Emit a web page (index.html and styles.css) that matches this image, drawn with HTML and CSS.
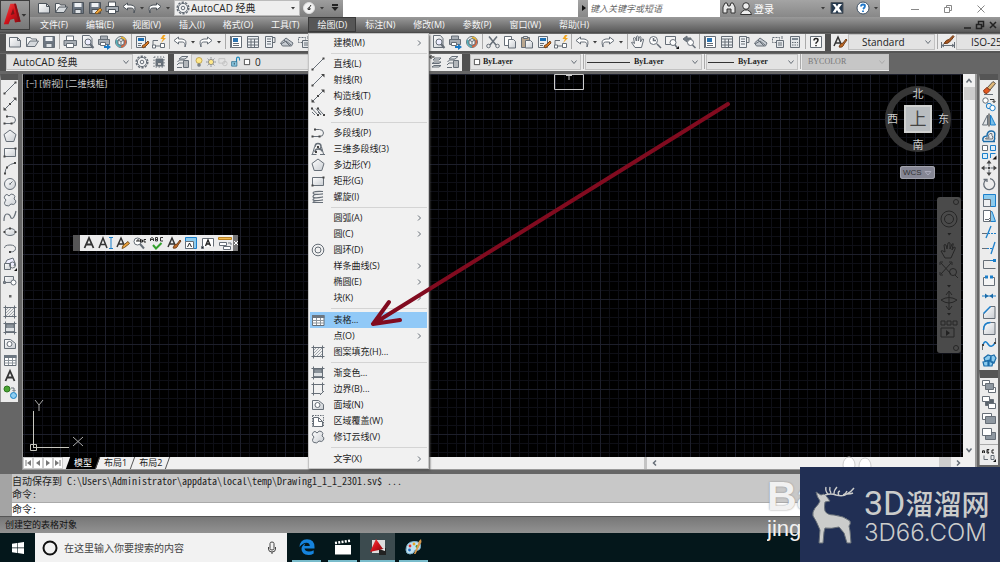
FILE: index.html
```html
<!DOCTYPE html>
<html lang="zh-CN">
<head>
<meta charset="utf-8">
<title>AutoCAD 经典</title>
<link rel="stylesheet" href="styles.css">
</head>
<body>
<svg class="defs" aria-hidden="true">
<defs>
<linearGradient id="red" x1="0" y1="0" x2="1" y2="1"><stop offset="0" stop-color="#f4504a"/><stop offset=".5" stop-color="#d3121b"/><stop offset="1" stop-color="#7e0a10"/></linearGradient>
<linearGradient id="pane" x1="0" y1="0" x2="1" y2="1"><stop offset="0" stop-color="#fff"/><stop offset="1" stop-color="#c9cdd2"/></linearGradient>
</defs>
<symbol id="new" viewBox="0 0 16 16"><path d="M2.500 3.500h8l3 3v6.500h-11z" fill="url(#pane)"/><path d="M10.500 3.500v3h3" /></symbol>
<symbol id="open" viewBox="0 0 16 16"><path d="M2.500 12.500v-9h4l1 1.500h5v2" fill="#f4f5f6"/><path d="M2.500 12.500l3.500-5.500h8.500l-3.500 5.500z" fill="#d5d9dd"/></symbol>
<symbol id="save" viewBox="0 0 16 16"><path d="M2.500 2.500h11v11h-11z" fill="#6c7682"/><path d="M4.500 3h7v4h-7z" fill="#eef1f4" stroke="none"/><path d="M5 9.500h6v4h-6z" fill="#dfe3e7"/></symbol>
<symbol id="saveas" viewBox="0 0 16 16"><use href="#save"/><path d="M8 13l5-5 2 2-5 4z" fill="#eda33b" stroke="#8a5a1c"/></symbol>
<symbol id="print" viewBox="0 0 16 16"><path d="M4.500 6v-4h7v4" fill="#fff"/><path d="M2 6.500h12.500v5H2z" fill="#a8aeb5"/><path d="M4.500 9.500h7v4h-7z" fill="#fff"/></symbol>
<symbol id="preview" viewBox="0 0 16 16"><path d="M3.500 1.500h7l2.500 3v9h-9.500z" fill="url(#pane)"/><circle cx="9" cy="8" r="3" fill="#eef"/><path d="M11 10l3.500 4" stroke-width="2"/></symbol>
<symbol id="publish" viewBox="0 0 16 16"><path d="M4.500 5V2h7v3M2.500 5.500h11v5h-11z" fill="#a8aeb5"/><path d="M4.500 8.500h5v3h-5z" fill="#fff"/><path d="M8 12h3v-2l4 3-4 3v-2H8z" fill="#1778c5" stroke="none"/></symbol>
<symbol id="cube" viewBox="0 0 16 16"><circle cx="8" cy="8" r="5.500" fill="#e6f0f2"/><path d="M8 2.500a6 6 0 0 1 5 3L8 8z" fill="#e4b53a" stroke="none"/><path d="M13 5.500a6 6 0 0 1-5 8V8z" fill="#d8653d" stroke="none"/><path d="M3 5.500L8 8v5.500a6 6 0 0 1-5-8z" fill="#52b0ba" stroke="none"/><path d="M8 4.500l3 1.500v4L8 11.500 5 10V6z" fill="#f5f7f8"/><path d="M5 6l3 1.500L11 6M8 7.500v4"/></symbol>
<symbol id="match" viewBox="0 0 16 16"><path d="M2.500 2.500h9v11h-9z" fill="#eef1f4"/><path d="M4 4h6v3H4z" fill="#1b6fb4" stroke="none"/><path d="M4 9.500h4M4 11.500h3"/><path d="M8 12l3-2 3-3 1 2-3 3-3 2z" fill="#d77a26" stroke="#7c4418"/></symbol>
<symbol id="block" viewBox="0 0 16 16"><path d="M2 12V6.500h5M4 12h7" /><path d="M1.500 11h3v3h-3zM9.500 9.500h4v4h-4z" fill="#fff"/><path d="M12 1L9.500 5H12l-2 4 5-5h-2.500l2-3z" fill="#f2a622" stroke="none"/></symbol>
<symbol id="undo" viewBox="0 0 16 16"><path d="M6.500 3L2 6.500 6.500 10V8h4q3 0 2.500 5 3-7.500-3-8H6.500z" fill="#fff"/></symbol>
<symbol id="redo" viewBox="0 0 16 16"><path d="M9.500 3L14 6.500 9.500 10V8h-4Q2.500 8 3 13 0 5.500 6 5h3.500z" fill="#fff"/></symbol>
<symbol id="arr" viewBox="0 0 8 8"><path d="M2 3h4L4 5.500z" fill="#3c3c3c" stroke="none"/></symbol>
<symbol id="chev" viewBox="0 0 8 8"><path d="M1.500 2.500L4 5.500l2.500-3" stroke-width="1"/></symbol>
<symbol id="sub" viewBox="0 0 8 8"><path d="M3 1.500L5.500 4 3 6.500" /></symbol>
<symbol id="props" viewBox="0 0 16 16"><path d="M3.500 2.500h10v11h-10z" fill="#fff"/><path d="M5 4h5v4H5z" fill="#2b73b0" stroke="none"/><path d="M5 9.500h6M5 11.500h6M2.500 2v12"/></symbol>
<symbol id="center" viewBox="0 0 16 16"><path d="M2.500 2.500h11v11h-11z" fill="#eef1f4"/><path d="M2.500 5h11M6 5v9M9.500 5v8M2.500 8h11M2.500 11h11"/></symbol>
<symbol id="palette" viewBox="0 0 16 16"><path d="M3.500 2.500h7v11h-7z" fill="#eef1f4"/><path d="M5 5h4M5 7.500h4M5 10h4M10.500 3.500h2.500v5h-2.500"/></symbol>
<symbol id="sheet" viewBox="0 0 16 16"><path d="M1.500 9L7 4l7 5-1.500 3h-9z" fill="#c5cad0"/><path d="M2 10l5-3 5 4M5 6l6 6"/></symbol>
<symbol id="markup" viewBox="0 0 16 16"><path d="M2.500 3.500h7v5h-7z" stroke-dasharray="2 1"/><path d="M6.500 6.500h7v7h-7z" fill="#e4e7ea"/><path d="M8 9h4M8 11h4M12 2v3"/></symbol>
<symbol id="calc" viewBox="0 0 16 16"><path d="M3.500 2.500h9v11h-9z" fill="#e4e7ea"/><path d="M5 4h6v2H5z" fill="#7c8791" stroke="none"/><path d="M5 8.500h6M5 11h6" stroke-dasharray="1.500 1"/></symbol>
<symbol id="help" viewBox="0 0 16 16"><path d="M2.500 2.500h11v11h-11z" fill="#f8f8f8"/><path d="M6 6.500q0-2 2-2t2 1.500-2 3v.8M8 11v1.200" stroke="#222" stroke-width="1.500"/></symbol>
<symbol id="cut" viewBox="0 0 16 16"><path d="M4 2.500L11 11M12 2.500L5 11" stroke-width="1.500"/><circle cx="3.500" cy="12" r="1.800"/><circle cx="12.500" cy="12" r="1.800"/></symbol>
<symbol id="copyc" viewBox="0 0 16 16"><path d="M2.500 2.500h7v9h-7z" fill="#fff"/><path d="M6.500 5.500h5l2 2v6.500h-7z" fill="url(#pane)"/></symbol>
<symbol id="paste" viewBox="0 0 16 16"><path d="M2.500 3.500h8v10h-8z" fill="#b9a68e"/><path d="M4.500 2.500h4v2h-4z" fill="#ddd"/><path d="M6.500 6.500h5l2 2v5.500h-7z" fill="url(#pane)"/></symbol>
<symbol id="hand" viewBox="0 0 16 16"><path d="M5 13.500L1.500 8.500q1-1 3 1L3.500 4q1-1 2 0l.8 3L6.500 2.500q1-1 1.800 0V7l1-4q1-.8 1.700.2L10.500 8l1.800-3q1.300-.5 1.200 1l-2 7.500z" fill="#f5f5f5"/></symbol>
<symbol id="zoomr" viewBox="0 0 16 16"><circle cx="6.500" cy="6.500" r="4" fill="#fff"/><path d="M6.500 4v2.500H9M10 10l4 4" stroke-width="1.500"/></symbol>
<symbol id="zoomw" viewBox="0 0 16 16"><path d="M1.500 2.500h10v8h-10z" fill="#f4f4f4"/><circle cx="9" cy="8.500" r="3" fill="#fff"/><path d="M11 11l2.500 3" stroke-width="1.500"/><path d="M15 12v3h-3z" fill="#111" stroke="none"/></symbol>
<symbol id="zoomp" viewBox="0 0 16 16"><path d="M6 2L2 5l4 3V6h4V4H6z" fill="#707a84"/><circle cx="9.500" cy="8.500" r="3" fill="#fff"/><path d="M11.500 11l3 3" stroke-width="1.500"/></symbol>
<symbol id="gear" viewBox="0 0 16 16"><circle cx="8" cy="8" r="5.800" stroke-width="1.500" stroke-dasharray="2.300 1.300"/><circle cx="8" cy="8" r="4.600" fill="#f2f3f4"/><circle cx="8" cy="8" r="1.800"/></symbol>
<symbol id="wsave" viewBox="0 0 16 16"><path d="M3 3h10v10H3z" stroke-dasharray="1.500 1.500"/><path d="M5 5h7v7H5z" fill="#68737e"/><path d="M6.500 8.500h4v3h-4z" fill="#ccc"/></symbol>
<symbol id="layers" viewBox="0 0 16 16"><path d="M4 5l3-2.500h6L10 5zM2.500 8l2-2h5M2 11l2-2h4M2 13.500h5" fill="#e4e7ea"/><path d="M8.500 6.500h5v7h-5z" fill="#fff"/><path d="M9 8h4M9 10h4M9 12h4"/></symbol>
<symbol id="layback" viewBox="0 0 16 16"><path d="M5 6l2-2h6l-2 2zM4 9.500l2-1.500h7l-2 1.500zM4 13l2-1.500h7L11 13z" fill="#e4e7ea"/><path d="M1.500 3h5M3.500 1L1.500 3l2 2" stroke="#111"/></symbol>
<symbol id="bulb" viewBox="0 0 16 16"><circle cx="8" cy="6" r="4" fill="#ffe88a" stroke="#b6963a"/><path d="M6.500 10.500h3v3h-3z" fill="#999"/></symbol>
<symbol id="sun" viewBox="0 0 16 16"><circle cx="8" cy="8" r="3.500" fill="#ffe88a" stroke="#777"/><path d="M8 1.500v2M8 12.500v2M1.500 8h2M12.500 8h2M3.500 3.500L5 5M11 11l1.500 1.500M12.500 3.500L11 5M5 11l-1.500 1.500"/></symbol>
<symbol id="vpf" viewBox="0 0 16 16"><g stroke="#bbb"><path d="M2.500 3.500h8v6h-8z"/><circle cx="10.500" cy="10" r="3"/></g></symbol>
<symbol id="lock" viewBox="0 0 16 16"><path d="M10 8V4q0-2.500 2-2.500T14 4v2" stroke="#1d86b8" stroke-width="1.500"/><path d="M3.500 7.500h7v6h-7z" fill="#8ec9e2" stroke="#286c8c"/><path d="M7 9v2.500" stroke="#123"/></symbol>
<symbol id="swatch" viewBox="0 0 16 16"><path d="M4.500 4.500h7v7h-7z" fill="#fff" stroke="#222"/></symbol>
<symbol id="astyle" viewBox="0 0 16 16"><path d="M2 12L6 3l4 9M3.500 9h5" stroke="#333" stroke-width="1.500"/><path d="M7 13q1-4 4-4l3-4 1 1-3 4q-1 4-5 3z" fill="#c06a24" stroke="#73401b"/></symbol>
<symbol id="dstyle" viewBox="0 0 16 16"><path d="M1.500 8v6M14.500 8v6M2 11.500h12M4 10l-2 1.500L4 13M12 10l2 1.500-2 1.500"/><path d="M4 9.500q2-4 5-4l4-4 1 1-3 4q-3 4-7 3z" fill="#a9581f" stroke="#6d3b1a"/></symbol>
<symbol id="line" viewBox="0 0 16 16"><path d="M2.500 13.500L13.500 2.500"/><path d="M1.500 12.500h2v2h-2zM12.500 1.500h2v2h-2z" fill="#444" stroke="none"/></symbol>
<symbol id="ray" viewBox="0 0 16 16"><path d="M2.500 13.500L13 3"/><path d="M1.500 12.500h2v2h-2zM11 2h3.500v3.500z" fill="#444" stroke="none"/></symbol>
<symbol id="xline" viewBox="0 0 16 16"><path d="M3 13L13 3"/><path d="M1.500 14.500V11L5 14.500zM14.500 1.500V5L11 1.500zM7 7h2v2H7z" fill="#444" stroke="none"/></symbol>
<symbol id="mline" viewBox="0 0 16 16"><path d="M2 4.500l6 6.500M8 4.500l6 6.500M2 8l3 3M6 4.500l5 6M8 8l3 3"/><path d="M1 3.500h2v2H1zM7 10h2v2H7zM7 3.500h2v2H7zM13 10h2v2h-2z" fill="#444" stroke="none"/></symbol>
<symbol id="pline" viewBox="0 0 16 16"><path d="M5.500 4.500h4q4 0 4 3.500t-4 3.500H2.500"/><path d="M4 3.500h2v2H4zM1.500 10.500h2v2h-2zM8.500 10.500h2v2h-2z" fill="#444" stroke="none"/></symbol>
<symbol id="p3d" viewBox="0 0 16 16"><path d="M4.500 6L2.500 13M11.500 6l2 7M1.500 13.500h5M10 13.500h5"/><path d="M5 6q0-3.500 3-3.500T11 5.500 8 8q4 0 4 2.500M5 11q0-3 3-3" stroke-width="1.500"/><path d="M7 5h2v2H7zM5 10h2v2H5z" fill="#444" stroke="none"/></symbol>
<symbol id="poly" viewBox="0 0 16 16"><path d="M8 2l6 4.500L11.800 13.500H4.200L2 6.500z" fill="url(#pane)"/></symbol>
<symbol id="rect" viewBox="0 0 16 16"><path d="M2.500 4.500h11v8h-11z" fill="url(#pane)"/><path d="M12.500 3.500h2v2h-2zM1.500 11.500h2v2h-2z" fill="#444" stroke="none"/></symbol>
<symbol id="helix" viewBox="0 0 16 16"><path d="M13 2.500Q3 2 3 4t10 1Q3 5 3 7.500t10 .500Q3 8.500 3 10.500t10 .500Q3 11.500 3 13.500h10" stroke-width="1.200"/></symbol>
<symbol id="donut" viewBox="0 0 16 16"><circle cx="8" cy="8" r="5.800"/><circle cx="8" cy="8" r="3"/></symbol>
<symbol id="arc" viewBox="0 0 16 16"><path d="M3 13.500Q3 5 13 3"/><path d="M2 12.500h2v2H2zM4 6.500h2v2H4zM12 2h2v2h-2z" fill="#444" stroke="none"/></symbol>
<symbol id="circle" viewBox="0 0 16 16"><circle cx="8" cy="8" r="5.500" fill="url(#pane)"/><path d="M8 8l2.500-2.500M7 8h2"/></symbol>
<symbol id="cloud" viewBox="0 0 16 16"><path d="M4 8q-3-2-1-4.500T7 4q2-3 4.500-1.500T12 7q3 1.500 1.500 4T9 12q-2 3-5 1.500T4 8z" fill="url(#pane)"/></symbol>
<symbol id="spline" viewBox="0 0 16 16"><path d="M2 13q0-7 3-7t4 4q3 2 5-7" stroke-width="1.200"/></symbol>
<symbol id="ellipse" viewBox="0 0 16 16"><ellipse cx="8" cy="8" rx="5.500" ry="3.500" fill="url(#pane)"/><path d="M1.500 7h2v2h-2zM12.500 7h2v2h-2zM7 3.500h2v2H7z" fill="#444" stroke="none"/></symbol>
<symbol id="earc" viewBox="0 0 16 16"><path d="M2.500 8q0-3 5.500-3t5.500 3.500T8 12"/><path d="M7 11h2v2H7z" fill="#444" stroke="none"/></symbol>
<symbol id="insert" viewBox="0 0 16 16"><path d="M3 8l2-4 6-2 2 5-1 3" fill="#eef"/><path d="M2.500 7.500h6v6h-6z" fill="url(#pane)"/><circle cx="10.500" cy="9" r="3"/><path d="M15 12v3h-3z" fill="#111" stroke="none"/></symbol>
<symbol id="mkblock" viewBox="0 0 16 16"><path d="M2.500 4.500h9v6h-9z" fill="url(#pane)"/><path d="M1.500 9.500h2v2h-2z"/><circle cx="11.500" cy="10.500" r="2.500" fill="#fff"/></symbol>
<symbol id="point" viewBox="0 0 16 16"><path d="M7 7h2.500v2.500H7z" fill="#666" stroke="none"/></symbol>
<symbol id="hatch" viewBox="0 0 16 16"><path d="M3.500 1.500v13M1.500 3.500h13M12.500 1.500v13M1.500 12.500h13"/><path d="M4 6l2-2M4 9l5-5M4 12l8-8M7 12l5-5M10 12l2-2" stroke="#a3a9af"/></symbol>
<symbol id="grad" viewBox="0 0 16 16"><path d="M4 4h8v8H4z" fill="#8b939b"/><path d="M4 8h8v3H4z" fill="#dfe2e5" stroke="none"/><path d="M3.500 1.500v13M1.500 3.500h13M12.500 1.500v13M1.500 12.500h13"/></symbol>
<symbol id="bound" viewBox="0 0 16 16"><path d="M3.500 1.500v13M1.500 3.500h13M12.500 1.500v9M1.500 12.500h9M14 10l-4 4" /></symbol>
<symbol id="region" viewBox="0 0 16 16"><path d="M2.500 12.500v-9h6l5 4v5z" fill="url(#pane)"/><circle cx="7.500" cy="8" r="2.500" fill="#fff"/></symbol>
<symbol id="wipe" viewBox="0 0 16 16"><path d="M2.500 2.500h11v11h-11z" stroke-dasharray="1.500 1"/><path d="M3.500 4.500h5l4 4v5h-9z" fill="#fff"/><path d="M8.500 4.500v4h4"/></symbol>
<symbol id="table" viewBox="0 0 16 16"><path d="M2.500 3.500h11.500v10H2.500z" fill="#fff"/><path d="M2 3h12.500v3H2z" fill="#6c7680" stroke="none"/><path d="M2.500 8.500H14M2.500 11H14M6.500 6v7M10.500 6v7" stroke="#8d959c"/></symbol>
<symbol id="bigA" viewBox="0 0 16 16"><path d="M3.500 13L8 3l4.500 10M5 9.500h6" stroke="#333" stroke-width="1.800"/></symbol>
<symbol id="addsel" viewBox="0 0 16 16"><circle cx="5" cy="5" r="3" fill="#4aa532" stroke="#2e7620"/><circle cx="11.500" cy="11.500" r="3" fill="#8ecdf3" stroke="#1880c0"/><path d="M9 4h3v3M10.500 6l1.500 1.500L13.500 6"/></symbol>
<symbol id="erase" viewBox="0 0 16 16"><path d="M6 8l6-6.500 2.500 2L9 10z" fill="#e0b878" stroke="#5a5048"/><path d="M2.500 10.500l3.500-3 3 3-3 3-2.500-.5z" fill="#e2571f" stroke="#8a3514"/><path d="M3 14.500h9"/></symbol>
<symbol id="copy" viewBox="0 0 16 16"><circle cx="4.500" cy="4.500" r="2.700" fill="#fff"/><circle cx="8" cy="10" r="2.700" stroke="#1b7fcb"/><circle cx="11.500" cy="12" r="2.700" fill="#fff" stroke="#1b7fcb"/><path d="M9 3.500h4v3M11.500 5L13 6.500 14.500 5" stroke="#333"/></symbol>
<symbol id="mirror" viewBox="0 0 16 16"><path d="M6.500 3v10h-5z" fill="#e0e3e6"/><path d="M9.500 3v10h5z" fill="#79bfe9" stroke="#1b7fcb"/><path d="M8 1.500v13" stroke="#222"/></symbol>
<symbol id="offset" viewBox="0 0 16 16"><path d="M2 13.500h12M2 13q-1-5 4-5 0-5 4.500-5t3 6q1 2-1 4.500" stroke="#1b6ba8" stroke-width="1.500"/><path d="M4.500 11h7q1-2-.5-3.500.5-3-2-2T8 10H5z" fill="#eee"/></symbol>
<symbol id="array" viewBox="0 0 16 16"><g stroke="#1b7fcb" fill="#dcedf8"><path d="M9.500 1.500h5v5h-5zM1.500 9.500h5v5h-5zM9.500 14v-4.500h5"/></g><path d="M1.500 1.500h5v5h-5z" fill="#fff"/><path d="M15.500 11.500v4h-4z" fill="#111" stroke="none"/></symbol>
<symbol id="move" viewBox="0 0 16 16"><path d="M8 3v10M3 8h10" stroke-dasharray="3.500 3"/><path d="M8 0l2.500 3.500h-5zM8 16l2.500-3.500h-5zM0 8l3.500-2.500v5zM16 8l-3.500-2.500v5zM7 7h2v2H7z" fill="#444" stroke="none"/></symbol>
<symbol id="rotate" viewBox="0 0 16 16"><path d="M5 3.700A5.500 5.500 0 1 0 9 2.700M2.500 3.500h3.500V6" stroke-width="1.300"/></symbol>
<symbol id="scale" viewBox="0 0 16 16"><path d="M2.500 2.500h12v12h-12z" fill="#8ccbee" stroke="#1b7fcb"/><path d="M2.500 7.500h7v7h-7z" fill="#eef0f2"/></symbol>
<symbol id="stretch" viewBox="0 0 16 16"><path d="M9 3.500h2l3.500 10h-5z" fill="#8ccbee" stroke="#1b7fcb"/><path d="M2.500 2.500h7v11h-7z" fill="#fff"/><path d="M4 11.500h4M8 10l1.500 1.500L8 13"/></symbol>
<symbol id="trim" viewBox="0 0 16 16"><path d="M1 9.500h5" /><path d="M7 9.500h8" stroke="#1b7fcb" stroke-dasharray="2 1"/><path d="M5 14l5-12" stroke="#1b7fcb" stroke-width="1.300"/></symbol>
<symbol id="extend" viewBox="0 0 16 16"><path d="M1 8.500h5"/><path d="M6 8.500h5" stroke="#1b7fcb" stroke-dasharray="2 1"/><path d="M10 14l4-12" stroke="#1b7fcb" stroke-width="1.300"/></symbol>
<symbol id="brkpt" viewBox="0 0 16 16"><path d="M2.500 4.500h11M2.500 4.500v8h12" /><path d="M9 4.500h4" stroke="#1b7fcb"/><path d="M12 3h3v3h-3z" fill="#1b7fcb" stroke="none"/></symbol>
<symbol id="brk" viewBox="0 0 16 16"><path d="M4 5.500H2.500v8h11v-8H12" fill="#f4f4f4"/><path d="M4 3.500h3v3H4zM9 3.500h3v3H9z" fill="#1b7fcb" stroke="none"/></symbol>
<symbol id="join" viewBox="0 0 16 16"><path d="M1 8h14" stroke="#1b7fcb"/><path d="M4 5.500L7.500 8 4 10.500zM12 5.500L8.500 8 12 10.500z" fill="#1b6ba8" stroke="none"/></symbol>
<symbol id="chamfer" viewBox="0 0 16 16"><path d="M2.500 10l7-7.500h4.500v12H2.500z" fill="url(#pane)"/><path d="M2.500 9.500l7-7" stroke="#1b7fcb" stroke-width="1.500"/></symbol>
<symbol id="fillet" viewBox="0 0 16 16"><path d="M2.500 10q0-7.500 7-7.500H14v12H2.500z" fill="url(#pane)"/><path d="M2.500 10q0-7.500 7-7.500" stroke="#1b7fcb" stroke-width="1.500"/></symbol>
<symbol id="blend" viewBox="0 0 16 16"><path d="M1.500 14V9M14.500 2v6"/><path d="M2 9q2-6 5-1t7-1" stroke="#1b7fcb" stroke-width="1.500"/><path d="M1 8h2v2H1zM13 6h2v2h-2z" fill="#444" stroke="none"/></symbol>
<symbol id="explode" viewBox="0 0 16 16"><path d="M3 6l4-3 3 1-1 4-5 1zM10 4l3-1 2 3-2 5-3-1zM2 10l5-1v5H3zM8 9l4 1-1 4H8z" fill="#8ccbee" stroke="#1b6ba8" stroke-width="1.200"/></symbol>
<symbol id="front" viewBox="0 0 16 16"><path d="M1.500 2.500h7v5h-7zM7.500 9.500h7v5h-7z" fill="#fff"/><path d="M4.500 5.500h8v6h-8z" fill="#8e97a0"/></symbol>
<symbol id="back" viewBox="0 0 16 16"><path d="M4.500 5.500h8v6h-8z" fill="#59626b"/><path d="M1.500 2.500h7v5h-7zM7.500 9.500h7v5h-7z" fill="#fff"/></symbol>
<symbol id="above" viewBox="0 0 16 16"><path d="M1.500 3.500h9v6h-9z" fill="#fff"/><path d="M4.500 6.500h10v7h-10z" fill="#8e97a0"/></symbol>
<symbol id="below" viewBox="0 0 16 16"><path d="M4.500 6.500h10v7h-10z" fill="#8e97a0"/><path d="M1.500 2.500h9v7h-9z" fill="#fff"/></symbol>
<symbol id="abc" viewBox="0 0 16 16"><path d="M1.500 6V4q1-2 2 0v2M1.500 5h2M6 6V2.500h2L6.500 4 8 6H6M13 3h-2v3h2" stroke="#222"/><path d="M3 8.500v4h4M10 8.500h3v4h-3z" /><path d="M15 12v3h-3z" fill="#111" stroke="none"/></symbol>
<symbol id="mtext" viewBox="0 0 16 16"><path d="M1 13L5 3l4 10M2.500 9.500h5" stroke="#333" stroke-width="1.500"/><path d="M13 3v10M11 2.500h4M11 13.500h4" stroke="#1b7fcb"/></symbol>
<symbol id="aedit" viewBox="0 0 16 16"><path d="M2 12L6 3l4 9M3.500 9h5" stroke="#333" stroke-width="1.500"/><path d="M7 13.500l1-3 5-4 1.500 2-5 4z" fill="#eda33b" stroke="#7c5320"/></symbol>
<symbol id="find" viewBox="0 0 16 16"><circle cx="5.500" cy="6.500" r="3.500" fill="#fff"/><path d="M8 9l4 4.500" stroke-width="2"/><path d="M5 7V5h2v2M8.500 4v3h2V5h-2M14 4.500h-2V7h2" stroke="#222"/></symbol>
<symbol id="spell" viewBox="0 0 16 16"><path d="M1.500 6V3.500l1.500-1 1.500 1V6M1.500 4.500h3M6.500 2.500h2v3.500h-2zM6.500 4.500h2M14 2.500h-2.500V6H14" stroke="#333"/><path d="M4 10l3 3.500L12.500 8" stroke="#33a02c" stroke-width="2"/></symbol>
<symbol id="tscale" viewBox="0 0 16 16"><path d="M2.500 2.500h11v11h-11z" fill="#8ccbee" stroke="#1b7fcb"/><path d="M2.500 6.500h8v7h-8z" fill="#fff"/><path d="M4.500 12L6.500 8l2 4" stroke="#222"/></symbol>
<symbol id="just" viewBox="0 0 16 16"><path d="M2.500 12.500v-9h11v8" fill="#fff"/><path d="M5.500 11L8 5l2.500 6M6.500 9h3" stroke="#222" stroke-width="1.300"/><path d="M1.500 11.500h2v2h-2z" fill="#222"/><path d="M13.500 5v5"/></symbol>
<symbol id="conv" viewBox="0 0 16 16"><path d="M1.500 2.500h13v2h-13z" fill="#f4bc51" stroke="#b98224"/><path d="M2.500 7.500h7v3h-7zM6.500 11.500h7v3h-7zM11 8h3v2" fill="#fff"/></symbol>
<symbol id="bino" viewBox="0 0 16 16"><path d="M2 13V7l2-4h2l1 3h2l1-3h2l2 4v6h-4V9H6v4z" fill="#e8e8e8" stroke="#333"/></symbol>
<symbol id="user" viewBox="0 0 16 16"><circle cx="8" cy="5" r="3.300" fill="#eee" stroke="#333"/><path d="M2.500 13.500q0-3 4-4.500h3q4 1.500 4 4.500z" fill="#eee" stroke="#333"/></symbol>
<symbol id="exch" viewBox="0 0 16 16"><path d="M2 2.500h12v11H2z" fill="#24384d"/><path d="M3.500 4h3L8 6.500 9.500 4H13l-3 4 3 4.500H9.500L8 10l-1.500 2.500h-3l3-4.500z" fill="#fff" stroke="none"/></symbol>
<symbol id="qmark" viewBox="0 0 16 16"><circle cx="8" cy="8" r="6" fill="#fff" stroke="#3e5166"/><path d="M6 6.500q0-2 2-2t2 1.500-2 3M8 10.500v1.500" stroke="#2077c9" stroke-width="1.800"/></symbol>
<symbol id="dial" viewBox="0 0 16 16"><circle cx="8" cy="8" r="5.500" fill="#f2f2f2" stroke="#ddd"/><path d="M8 8l2-3M7 8h2v1.500H7z" stroke="#333"/></symbol>
</svg>

<header class="head">
  <button class="app" aria-label="Application menu"><svg viewBox="0 0 30 30"><path d="M3 25L10 3h6l5 19-6 1-1-4-4 1-2 5z" fill="url(#red)"/><path d="M10.500 15L13 8l1.500 6z" fill="#7c1418"/><path d="M16 3l5 19-2 .5L14 3z" fill="#8a0d13"/><path d="M22 14h5l-2.500 3z" fill="#333"/></svg></button>
  <div class="head-main">
    <div class="title">
      <div class="quick">
        <button class="t" aria-label="New"><svg><use href="#new"/></svg></button><button class="t" aria-label="Open"><svg><use href="#open"/></svg></button><button class="t" aria-label="Save"><svg><use href="#save"/></svg></button><button class="t" aria-label="Save as"><svg><use href="#saveas"/></svg></button><button class="t" aria-label="Plot"><svg><use href="#print"/></svg></button><button class="t" aria-label="Undo"><svg><use href="#undo"/></svg></button><button class="d" aria-label="Undo list"><svg><use href="#arr"/></svg></button><button class="t" aria-label="Redo"><svg><use href="#redo"/></svg></button><button class="d" aria-label="Redo list"><svg><use href="#arr"/></svg></button>
        <div class="combo space"><svg class="i"><use href="#gear"/></svg><select aria-label="Workspace"><option>AutoCAD 经典</option></select><svg class="c"><use href="#arr"/></svg></div>
        <button class="t" aria-label="Display"><svg><use href="#dial"/></svg></button><button class="d" aria-label="Display list"><svg><use href="#arr"/></svg></button><button class="t" aria-label="Customize"><svg viewBox="0 0 16 16"><path d="M5 5h6" stroke="#222" stroke-width="2"/><path d="M4.500 7h7L8 11z" fill="#222" stroke="none"/></svg></button>
      </div>
      <div class="info">
        <button class="d" aria-label="Collapse search"><svg viewBox="0 0 8 8"><path d="M2 1l4 3-4 3z" fill="#111" stroke="none"/></svg></button>
        <input class="seek" type="text" placeholder="键入关键字或短语" aria-label="键入关键字或短语">
        <button class="t" aria-label="Search"><svg><use href="#bino"/></svg></button>
        <button class="login"><svg class="i"><use href="#user"/></svg>登录</button>
        <button class="d" aria-label="Sign-in list"><svg><use href="#arr"/></svg></button>
        <button class="t exch" aria-label="Exchange"><svg><use href="#exch"/></svg></button>
        <button class="t" aria-label="Help"><svg><use href="#qmark"/></svg></button><button class="d" aria-label="Help list"><svg><use href="#arr"/></svg></button>
      </div>
      <div class="win">
        <button aria-label="Minimize"><svg viewBox="0 0 10 10"><path d="M1 5.500h8"/></svg></button><button aria-label="Restore"><svg viewBox="0 0 10 10"><path d="M1.500 3.500h5v5h-5zM3.500 3V1.500h5v5H7"/></svg></button><button aria-label="Close"><svg viewBox="0 0 10 10"><path d="M1.500 1.500l7 7M8.500 1.500l-7 7"/></svg></button>
      </div>
    </div>
    <nav class="menubar">
      <button>文件(F)</button><button>编辑(E)</button><button>视图(V)</button><button>插入(I)</button><button>格式(O)</button><button>工具(T)</button>
      <div class="opened"><button class="on" aria-expanded="true">绘图(D)</button>
        <ul class="menu">
          <li><button><i></i>建模(M)<svg><use href="#sub"/></svg></button></li>
          <li class="sep"></li>
          <li><button><i><svg><use href="#line"/></svg></i>直线(L)</button></li>
          <li><button><i><svg><use href="#ray"/></svg></i>射线(R)</button></li>
          <li><button><i><svg><use href="#xline"/></svg></i>构造线(T)</button></li>
          <li><button><i><svg><use href="#mline"/></svg></i>多线(U)</button></li>
          <li class="sep"></li>
          <li><button><i><svg><use href="#pline"/></svg></i>多段线(P)</button></li>
          <li><button><i><svg><use href="#p3d"/></svg></i>三维多段线(3)</button></li>
          <li><button><i><svg><use href="#poly"/></svg></i>多边形(Y)</button></li>
          <li><button><i><svg><use href="#rect"/></svg></i>矩形(G)</button></li>
          <li><button><i><svg><use href="#helix"/></svg></i>螺旋(I)</button></li>
          <li class="sep"></li>
          <li><button><i></i>圆弧(A)<svg><use href="#sub"/></svg></button></li>
          <li><button><i></i>圆(C)<svg><use href="#sub"/></svg></button></li>
          <li><button><i><svg><use href="#donut"/></svg></i>圆环(D)</button></li>
          <li><button><i></i>样条曲线(S)<svg><use href="#sub"/></svg></button></li>
          <li><button><i></i>椭圆(E)<svg><use href="#sub"/></svg></button></li>
          <li><button><i></i>块(K)<svg><use href="#sub"/></svg></button></li>
          <li class="sep wide"></li>
          <li><button class="hot"><i><svg><use href="#table"/></svg></i>表格...</button></li>
          <li><button><i></i>点(O)<svg><use href="#sub"/></svg></button></li>
          <li><button><i><svg><use href="#hatch"/></svg></i>图案填充(H)...</button></li>
          <li class="sep"></li>
          <li><button><i><svg><use href="#grad"/></svg></i>渐变色...</button></li>
          <li><button><i><svg><use href="#bound"/></svg></i>边界(B)...</button></li>
          <li><button><i><svg><use href="#region"/></svg></i>面域(N)</button></li>
          <li><button><i><svg><use href="#wipe"/></svg></i>区域覆盖(W)</button></li>
          <li><button><i><svg><use href="#cloud"/></svg></i>修订云线(V)</button></li>
          <li class="sep wide"></li>
          <li><button><i></i>文字(X)<svg><use href="#sub"/></svg></button></li>
        </ul>
      </div>
      <button>标注(N)</button><button>修改(M)</button><button>参数(P)</button><button>窗口(W)</button><button>帮助(H)</button>
      <div class="mdi"><button aria-label="Minimize drawing"><svg viewBox="0 0 10 10"><path d="M2 8h7"/></svg></button><button aria-label="Restore drawing"><svg viewBox="0 0 10 10"><path d="M1.500 4.500h5v4h-5zM3.500 4V1.500h5v5H7"/></svg></button><button aria-label="Close drawing"><svg viewBox="0 0 10 10"><path d="M2 2l6 6M8 2l-6 6"/></svg></button></div>
    </nav>
  </div>
</header>

<div class="row">
  <div class="bar grip">
    <button class="t" aria-label="New"><svg><use href="#new"/></svg></button><button class="t" aria-label="Open"><svg><use href="#open"/></svg></button><button class="t" aria-label="Save"><svg><use href="#save"/></svg></button><span class="v"></span>
    <button class="t" aria-label="Plot"><svg><use href="#print"/></svg></button><button class="t" aria-label="Preview"><svg><use href="#preview"/></svg></button><button class="t" aria-label="Publish"><svg><use href="#publish"/></svg></button><button class="t" aria-label="3D print"><svg><use href="#cube"/></svg></button><span class="v"></span>
    <button class="t" aria-label="Match"><svg><use href="#match"/></svg></button><button class="t" aria-label="Block editor"><svg><use href="#block"/></svg></button><span class="v"></span>
    <button class="t" aria-label="Undo"><svg><use href="#undo"/></svg></button><button class="d" aria-label="Undo list"><svg><use href="#arr"/></svg></button><button class="t" aria-label="Redo"><svg><use href="#redo"/></svg></button><button class="d" aria-label="Redo list"><svg><use href="#arr"/></svg></button><span class="v"></span>
    <button class="t" aria-label="Properties"><svg><use href="#props"/></svg></button><button class="t" aria-label="Design center"><svg><use href="#center"/></svg></button><button class="t" aria-label="Palettes"><svg><use href="#palette"/></svg></button><button class="t" aria-label="Sheets"><svg><use href="#sheet"/></svg></button><button class="t" aria-label="Markup"><svg><use href="#markup"/></svg></button><button class="t" aria-label="Calculator"><svg><use href="#calc"/></svg></button><span class="v"></span>
    <button class="t" aria-label="Help"><svg><use href="#help"/></svg></button>
  </div>
  <div class="bar grip">
    <button class="t" aria-label="New"><svg><use href="#new"/></svg></button><button class="t" aria-label="Open"><svg><use href="#open"/></svg></button><button class="t" aria-label="Save"><svg><use href="#save"/></svg></button><span class="v"></span>
    <button class="t" aria-label="Plot"><svg><use href="#print"/></svg></button><button class="t" aria-label="Preview"><svg><use href="#preview"/></svg></button><button class="t" aria-label="Publish"><svg><use href="#publish"/></svg></button><button class="t" aria-label="3D print"><svg><use href="#cube"/></svg></button><span class="v"></span>
    <button class="t" aria-label="Cut"><svg><use href="#cut"/></svg></button><button class="t" aria-label="Copy"><svg><use href="#copyc"/></svg></button><button class="t" aria-label="Paste"><svg><use href="#paste"/></svg></button><button class="t" aria-label="Match"><svg><use href="#match"/></svg></button><button class="t" aria-label="Block editor"><svg><use href="#block"/></svg></button><span class="v"></span>
    <button class="t" aria-label="Undo"><svg><use href="#undo"/></svg></button><button class="d" aria-label="Undo list"><svg><use href="#arr"/></svg></button><button class="t" aria-label="Redo"><svg><use href="#redo"/></svg></button><button class="d" aria-label="Redo list"><svg><use href="#arr"/></svg></button><span class="v"></span>
    <button class="t" aria-label="Pan"><svg><use href="#hand"/></svg></button><button class="t" aria-label="Zoom"><svg><use href="#zoomr"/></svg></button><button class="t" aria-label="Zoom window"><svg><use href="#zoomw"/></svg></button><button class="t" aria-label="Zoom previous"><svg><use href="#zoomp"/></svg></button><span class="v"></span>
    <button class="t" aria-label="Properties"><svg><use href="#props"/></svg></button><button class="t" aria-label="Design center"><svg><use href="#center"/></svg></button><button class="t" aria-label="Palettes"><svg><use href="#palette"/></svg></button><button class="t" aria-label="Sheets"><svg><use href="#sheet"/></svg></button><button class="t" aria-label="Markup"><svg><use href="#markup"/></svg></button><button class="t" aria-label="Calculator"><svg><use href="#calc"/></svg></button><span class="v"></span>
    <button class="t" aria-label="Help"><svg><use href="#help"/></svg></button>
  </div>
  <div class="bar grip">
    <button class="t" aria-label="Text style"><svg><use href="#astyle"/></svg></button>
    <div class="combo style"><select aria-label="Text style"><option>Standard</option></select><svg class="c"><use href="#chev"/></svg></div><span class="v"></span>
    <button class="t" aria-label="Dimension style"><svg><use href="#dstyle"/></svg></button>
    <div class="combo dim"><select aria-label="Dimension style"><option>ISO-25</option></select><svg class="c"><use href="#chev"/></svg></div>
  </div>
</div>
<div class="row second">
  <div class="bar grip">
    <div class="combo work"><select aria-label="Workspace"><option>AutoCAD 经典</option></select><svg class="c"><use href="#chev"/></svg></div>
    <button class="t" aria-label="Workspace settings"><svg><use href="#gear"/></svg></button><button class="t" aria-label="My workspace"><svg><use href="#wsave"/></svg></button>
  </div>
  <div class="bar grip">
    <button class="t" aria-label="Layer properties"><svg><use href="#layers"/></svg></button>
    <div class="combo layer"><svg class="i"><use href="#bulb"/></svg><svg class="i"><use href="#sun"/></svg><svg class="i"><use href="#vpf"/></svg><svg class="i"><use href="#lock"/></svg><svg class="i"><use href="#swatch"/></svg><select aria-label="Layer"><option>0</option></select><svg class="c"><use href="#chev"/></svg></div>
    <button class="t" aria-label="Layer previous"><svg><use href="#layback"/></svg></button><button class="t" aria-label="Layer states"><svg><use href="#layers"/></svg></button>
  </div>
  <div class="bar grip by">
    <div class="combo color"><svg class="i"><use href="#swatch"/></svg><select aria-label="Color"><option>ByLayer</option></select><svg class="c"><use href="#chev"/></svg></div><span class="v"></span>
    <div class="combo ltype"><hr><select aria-label="Linetype"><option>ByLayer</option></select><svg class="c"><use href="#chev"/></svg></div><span class="v"></span>
    <div class="combo lweight"><hr><select aria-label="Lineweight"><option>ByLayer</option></select><svg class="c"><use href="#chev"/></svg></div><span class="v"></span>
    <div class="combo plot"><select aria-label="Plot style" disabled><option>BYCOLOR</option></select><svg class="c"><use href="#chev"/></svg></div>
  </div>
</div>

<main class="work-area">
  <aside class="side">
    <div class="tools">
      <button class="t" aria-label="Line"><svg><use href="#line"/></svg></button><button class="t" aria-label="Construction line"><svg><use href="#xline"/></svg></button><button class="t" aria-label="Polyline"><svg><use href="#pline"/></svg></button><button class="t" aria-label="Polygon"><svg><use href="#poly"/></svg></button><button class="t" aria-label="Rectangle"><svg><use href="#rect"/></svg></button><button class="t" aria-label="Arc"><svg><use href="#arc"/></svg></button><button class="t" aria-label="Circle"><svg><use href="#circle"/></svg></button><button class="t" aria-label="Revision cloud"><svg><use href="#cloud"/></svg></button><button class="t" aria-label="Spline"><svg><use href="#spline"/></svg></button><button class="t" aria-label="Ellipse"><svg><use href="#ellipse"/></svg></button><button class="t" aria-label="Ellipse arc"><svg><use href="#earc"/></svg></button><button class="t" aria-label="Insert block"><svg><use href="#insert"/></svg></button><button class="t" aria-label="Make block"><svg><use href="#mkblock"/></svg></button><button class="t" aria-label="Point"><svg><use href="#point"/></svg></button><button class="t" aria-label="Hatch"><svg><use href="#hatch"/></svg></button><button class="t" aria-label="Gradient"><svg><use href="#grad"/></svg></button><button class="t" aria-label="Region"><svg><use href="#region"/></svg></button><button class="t" aria-label="Table"><svg><use href="#table"/></svg></button><button class="t" aria-label="Multiline text"><svg><use href="#bigA"/></svg></button><button class="t" aria-label="Add selected"><svg><use href="#addsel"/></svg></button>
    </div>
  </aside>
  <section class="doc">
    <div class="view">
      <div class="canvas">
        <div class="vlabel">[−] [俯视] [二维线框]</div>
        <svg class="titleblock" viewBox="0 0 30 17"><path d="M.5.5h29v15H.5zM12 1.500h6M15 2v4" stroke="#ccc"/></svg>
        <div class="float">
          <button class="t" aria-label="Multiline text"><svg><use href="#bigA"/></svg></button><button class="t" aria-label="Single line text"><svg><use href="#mtext"/></svg></button><button class="t" aria-label="Edit text"><svg><use href="#aedit"/></svg></button><button class="t" aria-label="Find"><svg><use href="#find"/></svg></button><button class="t" aria-label="Spelling"><svg><use href="#spell"/></svg></button><button class="t" aria-label="Text style"><svg><use href="#astyle"/></svg></button><button class="t" aria-label="Scale text"><svg><use href="#tscale"/></svg></button><button class="t" aria-label="Justify"><svg><use href="#just"/></svg></button><button class="t" aria-label="Convert distance"><svg><use href="#conv"/></svg></button><button class="x" aria-label="Close toolbar"><svg viewBox="0 0 6 6"><path d="M1 1l4 4M5 1L1 5" stroke="#fff"/></svg></button>
        </div>
        <svg class="ucs" viewBox="0 0 60 56"><path d="M6.500 12v36M6 48.500h36M3.500 45.500h6v6h-6z" stroke="#c8c8c0"/><path d="M8 1l4 5 4-5M12 6v6M46 38l10 9M56 38l-10 9" stroke="#aaa"/></svg>
        <div class="compass"><span>北</span><span>西</span><button class="top">上</button><span>东</span><span>南</span></div>
        <button class="wcs">WCS <svg viewBox="0 0 8 8"><path d="M1 2.500h6L4 6z" stroke="#aab"/></svg></button>
        <div class="nav">
          <svg viewBox="0 0 24 156"><g stroke="#262626"><circle cx="19" cy="5" r="2.500"/><circle cx="12" cy="22" r="8"/><circle cx="12" cy="22" r="4.500"/><path d="M8 61l-4-7q1-1 4 1l-1-7q1-1 2 0l1 4 1-6q1-1 2 0v6l2-5q2-1 1 1l-1 5 2-3q2 0 1 2l-4 9zM4 66l10 11M14 66L4 77M3 68v-3h3M15 68v-3h-3M3 75v3h3"/><circle cx="16" cy="75" r="3.500"/><path d="M18 78l3 3M12 95v17M9 98l3-4 3 4M9 109l3 4 3-4M4 103q8-5 16 0-8 6-16 0M4 124h4v4H4zM10 124h4v4h-4zM16 124h4v4h-4zM4 131h13v9H4z"/><circle cx="19" cy="151" r="2.500"/></g><path d="M10.500 36h4L12 38.500zM10 88h4l-2 2.500zM10 116h4l-2 2.500zM9 133l4 3-4 3z" fill="#222"/></svg>
        </div>
      </div>
      <div class="vscroll"><svg viewBox="0 0 8 8"><path d="M1.500 5.500L4 2.500l2.500 3"/></svg><b></b><svg class="end" viewBox="0 0 8 8"><path d="M1.500 2.500L4 5.500l2.500-3"/></svg></div>
    </div>
    <div class="tabs">
      <button class="n" aria-label="First"><svg viewBox="0 0 8 8"><path d="M2 1v6"/><path d="M7 1v6L3 4z" class="s"/></svg></button><button class="n" aria-label="Previous"><svg viewBox="0 0 8 8"><path d="M6 1v6L2 4z" class="s"/></svg></button><button class="n" aria-label="Next"><svg viewBox="0 0 8 8"><path d="M2 1v6l4-3z" class="s"/></svg></button><button class="n" aria-label="Last"><svg viewBox="0 0 8 8"><path d="M6 1v6"/><path d="M1 1v6l4-3z" class="s"/></svg></button>
      <button class="tab cur">模型</button><button class="tab">布局1</button><button class="tab">布局2</button>
      <div class="hscroll"><svg viewBox="0 0 8 8"><path d="M5 1.500L2.500 4 5 6.500"/></svg><b></b><svg viewBox="0 0 8 8"><path d="M3 1.500L5.500 4 3 6.500"/></svg></div>
    </div>
  </section>
  <aside class="side right">
    <div class="tools">
      <button class="t" aria-label="Erase"><svg><use href="#erase"/></svg></button><button class="t" aria-label="Copy"><svg><use href="#copy"/></svg></button><button class="t" aria-label="Mirror"><svg><use href="#mirror"/></svg></button><button class="t" aria-label="Offset"><svg><use href="#offset"/></svg></button><button class="t" aria-label="Array"><svg><use href="#array"/></svg></button><button class="t" aria-label="Move"><svg><use href="#move"/></svg></button><button class="t" aria-label="Rotate"><svg><use href="#rotate"/></svg></button><button class="t" aria-label="Scale"><svg><use href="#scale"/></svg></button><button class="t" aria-label="Stretch"><svg><use href="#stretch"/></svg></button><button class="t" aria-label="Trim"><svg><use href="#trim"/></svg></button><button class="t" aria-label="Extend"><svg><use href="#extend"/></svg></button><button class="t" aria-label="Break at point"><svg><use href="#brkpt"/></svg></button><button class="t" aria-label="Break"><svg><use href="#brk"/></svg></button><button class="t" aria-label="Join"><svg><use href="#join"/></svg></button><button class="t" aria-label="Chamfer"><svg><use href="#chamfer"/></svg></button><button class="t" aria-label="Fillet"><svg><use href="#fillet"/></svg></button><button class="t" aria-label="Blend"><svg><use href="#blend"/></svg></button><button class="t" aria-label="Explode"><svg><use href="#explode"/></svg></button>
    </div>
    <div class="tools">
      <button class="t" aria-label="Bring to front"><svg><use href="#front"/></svg></button><button class="t" aria-label="Send to back"><svg><use href="#back"/></svg></button><button class="t" aria-label="Bring above"><svg><use href="#above"/></svg></button><button class="t" aria-label="Send under"><svg><use href="#below"/></svg></button><span class="h"></span><button class="t" aria-label="Text to front"><svg><use href="#abc"/></svg></button>
    </div>
  </aside>
</main>

<section class="cmd">
  <div class="log"><p>自动保存到 C:\Users\Administrator\appdata\local\temp\Drawing1_1_1_2301.sv$ ...</p><p>命令:</p></div>
  <label class="prompt">命令:<input type="text" aria-label="命令"></label>
</section>
<footer class="status">创建空的表格对象</footer>
<div class="taskbar">
  <button class="start" aria-label="Start"><svg viewBox="0 0 12 12"><path d="M0 1.700L5 1v4.600H0zM5.600.9L12 0v5.600H5.600zM0 6.200h5v4.700l-5-.7zM5.600 6.200H12V12l-6.400-.9z" fill="#fff"/></svg></button>
  <label class="search"><svg viewBox="0 0 16 16"><circle cx="8" cy="8" r="6.500" stroke="#111" stroke-width="2"/></svg><input type="text" placeholder="在这里输入你要搜索的内容" aria-label="在这里输入你要搜索的内容"><svg viewBox="0 0 16 16"><path d="M6 3.500q0-1.500 2-1.500t2 1.500v5q0 1.500-2 1.500t-2-1.500zM4.500 7v2q0 3 3.500 3t3.500-3V7M8 12v2" stroke="#444"/></svg></label>
  <button class="task" aria-label="Edge"><svg viewBox="0 0 18 18"><path d="M1.500 9Q2 1.500 9 1.300 16.500 1.500 16.500 9v1.500H6.500q.5 3 4.500 3 2.500 0 4.700-1.300v3.300Q13.500 17 10.500 17 3.500 16.500 3.500 11q0-3.500 4-5.500-1 1-1.200 2.500h5.500Q11.500 4.800 8.500 4.800 4.500 5 1.500 9z" fill="#1583dd"/></svg></button>
  <button class="task" aria-label="Movies"><svg viewBox="0 0 18 18"><path d="M1 7h16v9.500H1z" fill="#fff"/><path d="M1 5L17 2.500" stroke="#fff" stroke-width="2.500" stroke-dasharray="2 1.300"/></svg></button>
  <button class="task now" aria-label="AutoCAD"><svg viewBox="0 0 18 18"><path d="M3 2h13v13H3z" fill="#ddd"/><path d="M10 10h7v7h-7z" fill="#222"/><path d="M10 11l6 2v-3z" fill="#eee"/><path d="M1 14L7 1l7 10-4 1-5 1z" fill="url(#red)"/></svg></button>
  <button class="task" aria-label="Paint"><svg viewBox="0 0 18 18"><path d="M1 12Q1 4 9 3.500q7 0 6.500 5T10 12q-1 4-5 4t-4-4z" fill="#bfe2f2" stroke="#7cb2cc"/><circle cx="5" cy="8" r="1.400" fill="#d33"/><circle cx="9" cy="6" r="1.400" fill="#e8a326"/><circle cx="12" cy="8.500" r="1.400" fill="#3a9c3a"/><circle cx="4.500" cy="12" r="1.400" fill="#2b6fc2"/><path d="M9 16l5-13 2-2 .5 3-6 12z" fill="#d99a4c"/></svg></button>
</div>

<div class="wm" aria-hidden="true"><svg class="paw" viewBox="0 0 30 16"><ellipse cx="7" cy="9" rx="6" ry="8"/><ellipse cx="23" cy="10" rx="6" ry="8"/></svg><span class="wm-a">Bai</span><span class="wm-b">jingyan</span></div>
<svg class="pointer" viewBox="0 0 364 228" aria-hidden="true"><path d="M360 4L5 224M21 202L5 224l27-4" stroke="#810b1f" stroke-width="4" stroke-linecap="round" stroke-linejoin="round"/></svg>
<div class="brand">
  <svg viewBox="0 0 44 60" aria-hidden="true"><path d="M4 7l5 3 3-1 3 3 3 4-5 1q-1 5 0 9 2 4 9 4 10 1 16 6 1 3-1 5l1 5 1 12h-4l-3-10-5-6q-8 2-14 1l-1 4-1 11H7l1-13Q4 35 1 31q-1-4 2-8 4-4 5-7Q5 12 4 7z" fill="#cbcccb"/><path d="M13 10q6-2 11 0 7 2 11-1 4-2 7-6M16 9q-3-3-2-7M19 8q-2-3-1-6M22 9q0-4 3-7M27 10q-2-3 1-4M31 10q3-1 4-4M35 9q4 0 6-1" stroke="#cbcccb" stroke-width="1.400"/></svg>
  <div class="words"><div class="b1"><span>3D</span>溜溜网</div><div class="b2">3D66.COM</div></div>
</div>
</body>
</html>
```
FILE: styles.css
```css
* { box-sizing: border-box; }
body {
  margin: 0; min-height: 100vh; display: flex; flex-direction: column; position: relative; overflow: hidden;
  background: #666; color: #222;
  font: 9px/16px "Open Sans", "Noto Sans CJK SC", sans-serif;
}
button, select, input { font: inherit; color: inherit; margin: 0; padding: 0; border: 0; border-radius: 0; background: none; outline: 0; }
button { white-space: nowrap; }
svg { fill: none; stroke: #666e77; display: block; flex: none; }
.defs { position: absolute; width: 0; height: 0; }
p, ul { margin: 0; padding: 0; list-style: none; }
.t { width: 17px; height: 16px; flex: none; display: flex; align-items: center; justify-content: center; }
.t svg, .i { width: 16px; height: 16px; }
.d { width: 9px; height: 16px; flex: none; display: flex; align-items: center; justify-content: center; }
.d svg, .c { width: 8px; height: 8px; }

/* header */
.head { display: flex; height: 33px; background: linear-gradient(#999 0, #777 50%, #999 52%, #5c5c5c 95%, #444 100%); position: relative; z-index: 5; }
.app { width: 30px; height: 30px; flex: none; border: 1px solid #3e3e3e; background: linear-gradient(#9c9c9c, #787878); }
.app svg { width: 28px; height: 28px; stroke: none; }
.head-main { flex: 1; min-width: 0; }
.title { display: flex; height: 17px; background: #fff; }
.quick { display: flex; padding-left: 5px; width: 313px; flex: none; background: linear-gradient(#9e9e9e, #7e7e7e); }
.info { display: flex; margin-left: auto; width: 302px; padding-left: 1px; background: linear-gradient(#a4a4a4, #888); }
.quick .t svg, .info .t svg { stroke: #4c535a; }
.combo { display: flex; align-items: center; min-width: 0; background: #e3e3e3; border: 1px solid #c2c2c2; padding-right: 2px; height: 16px; }
.combo select { appearance: none; flex: 1; min-width: 0; line-height: 14px; opacity: 1; }
.space { width: 130px; margin-left: 2px; background: #eee; border-color: #bbb; font-size: 10px; }
.seek { width: 132px; background: #fff; padding: 0 2px; font-style: italic; }
.seek::placeholder { color: #666; opacity: 1; }
.login { display: flex; align-items: center; color: #fff; font-size: 10px; flex: 1; }
.login svg { margin-left: 1px; }
.exch { margin: 0 9px 0 1px; }
.win { width: 120px; padding: 0 3px 0 18px; display: flex; justify-content: space-between; align-items: center; }
.win button { width: 33px; display: grid; place-items: center; }
.win svg { width: 10px; height: 10px; stroke: #888; }
.menubar { display: flex; height: 15px; padding-left: 1px; color: #f6f6f6; }
.menubar > button, .on { padding: 0 9px; line-height: 15px; height: 15px; }
.opened { position: relative; }
.on { background: #565656; box-shadow: inset 0 0 0 1px #3a3a3a; display: block; }
.mdi { margin-left: auto; display: flex; gap: 3px; padding-right: 2px; align-items: center; }
.mdi svg { width: 10px; height: 10px; stroke: #222; stroke-width: 1.500; }

/* drop-down menu */
.menu { position: absolute; top: 16px; left: 0; width: 121px; padding: 1px; background: #f1f1f1; border: 1px solid #c4c4c4; box-shadow: 1px 2px 2px #555; color: #1c1c1c; z-index: 20; }
.menu li button { display: flex; align-items: center; width: 100%; height: 16px; line-height: 16px; text-align: left; }
.menu i { width: 23px; flex: none; }
.menu i svg { width: 16px; height: 16px; }
.menu li button > svg { width: 8px; height: 8px; margin: 0 4px 0 auto; }
.menu .hot { background: #91c9f7; }
.sep { height: 5px; padding-top: 2px; }
.sep.wide { height: 6px; }
.sep::before { content: ""; display: block; height: 1px; margin-left: 21px; background: #d4d4d4; }

/* toolbars */
.row { display: flex; height: 20px; padding-top: 1px; background: linear-gradient(#666, #555); overflow: hidden; }
.row.second { height: 21px; background: #666; }
.bar { display: flex; height: 17px; flex: none; background: #ececec; padding-right: 1px; }
.grip { border-left: 6px solid #505050; }
.v { width: 4px; flex: none; height: 15px; background: linear-gradient(#aaa, #aaa) 2px 0 / 1px 100% no-repeat; }
.style { width: 87px; font-size: 10px; padding-left: 13px; }
.dim { width: 90px; font-size: 10px; padding-left: 14px; }
.work { width: 127px; font-size: 10px; padding-left: 6px; }
.layer { width: 236px; font-size: 10px; padding-left: 1px; }
.layer .i { width: 12px; height: 12px; }
.layer select { padding-left: 2px; }
.by { font-family: "Liberation Serif", serif; font-size: 8px; padding-right: 0; border-left-width: 8px; }
.by .combo { font-weight: 700; }
.by .i { width: 12px; height: 14px; }
.by hr { border: 0; border-top: 1px solid #333; margin: 0 4px 0 1px; }
.color { width: 111px; }
.ltype { width: 117px; }
.ltype hr { width: 43px; }
.lweight { width: 92px; }
.lweight hr { width: 26px; }
.by .plot { width: 87px; background: #c6c6c6; color: #777; padding-left: 5px; font-weight: 400; }
.plot svg { stroke: #aaa; }

/* work area */
.work-area { flex: 1; display: flex; min-height: 0; }
.side { width: 22px; flex: none; }
.tools { width: 18px; background: #ececec; border-top: 6px solid #555; padding-bottom: 2px; border-left: 1px solid #999; }
.right { padding-left: 2px; width: 23px; overflow: hidden; }
.right .tools { width: 19px; }
.tools + .tools { border-top-width: 8px; }
.h { display: block; height: 5px; background: linear-gradient(#aaa, #aaa) 0 2px / 100% 1px no-repeat; }
.doc { flex: 1; min-width: 0; display: flex; flex-direction: column; border: solid #9a9a9a; border-width: 0 2px 1px 1px; margin-bottom: 3px; }
.view { flex: 1; display: flex; min-height: 0; }
.canvas {
  flex: 1; position: relative; overflow: hidden; background-color: #000;
  background-image: linear-gradient(90deg, #1d1f2b 1px, transparent 1px), linear-gradient(#1d1f2b 1px, transparent 1px), linear-gradient(90deg, #0e0f16 1px, transparent 1px), linear-gradient(#0e0f16 1px, transparent 1px);
  background-size: 45px 45px, 45px 45px, 9px 9px, 9px 9px;
  background-position: 37px 0, 0 0, 1px 0, 0 0;
  color: #ccc;
}
.vlabel { padding: 2px 3px; }
.titleblock { position: absolute; left: 531px; top: 0; width: 30px; height: 17px; }
.float { position: absolute; left: 50px; top: 161px; display: flex; background: #ececec; border-left: 7px solid #555; }
.x { width: 5px; height: 16px; background: #777; }
.x svg { width: 6px; height: 6px; }
.ucs { position: absolute; left: 4px; bottom: 2px; width: 60px; height: 56px; }
.compass { position: absolute; right: 8px; top: 8px; width: 74px; height: 74px; display: grid; grid-template-columns: 1fr 28px 1fr; grid-template-rows: 1fr 28px 1fr; place-items: center; font-size: 11px; color: #ccc; }
.compass::before { content: ""; position: absolute; inset: 4px; border: 7px solid #363636; border-radius: 50%; }
.compass > * { position: relative; }
.compass span:nth-child(1), .compass span:nth-child(5) { grid-column: 1 / 4; }
.compass span:nth-child(5) { grid-row: 3; }
.top { width: 28px; height: 28px; background: #b9bdc0; border: 2px solid #d0d1d0; color: #444; font-size: 17px; line-height: 20px; }
.wcs { position: absolute; right: 28px; top: 92px; width: 35px; height: 13px; border-radius: 3px; background: #858694; box-shadow: inset 0 0 0 1px #a2a3ad; color: #333; font: 8px/13px "Liberation Sans", sans-serif; display: flex; align-items: center; justify-content: space-between; padding: 0 3px; }
.wcs svg { width: 8px; height: 8px; }
.nav { position: absolute; right: 2px; top: 123px; width: 24px; background: #4a4a4a; border-radius: 3px; }
.nav svg { display: block; width: 24px; height: 156px; stroke: none; }
.vscroll { width: 12px; background: #f0f0f0; display: flex; flex-direction: column; align-items: center; padding: 3px 0; }
.vscroll svg, .hscroll svg { width: 8px; height: 8px; stroke-width: 1.500; }
.vscroll b { width: 11px; height: 13px; margin-top: 2px; background: #cdcdcd; }
.end { margin-top: auto; }
.tabs { display: flex; height: 12px; background: #f0f0f0; line-height: 12px; }
.n { width: 10px; background: #fff; box-shadow: inset 0 0 0 1px #ccc; display: grid; place-items: center; }
.n svg { width: 8px; height: 8px; stroke: #777; }
.tabs .s { fill: #777; stroke: none; }
.tab { position: relative; padding: 0 6px; line-height: 12px; z-index: 0; }
.tab::before { content: ""; position: absolute; inset: 0; border-right: 1px solid #555; transform: skewX(-20deg); z-index: -1; }
.tab.cur { color: #fff; margin-left: 5px; }
.tab.cur::before { background: #000; }
.hscroll { margin-left: auto; width: 320px; border-left: 3px solid #c4c4c4; display: flex; align-items: center; padding: 0 2px 0 4px; gap: 3px; margin-right: 11px; }
.hscroll b { margin-left: auto; width: 12px; height: 12px; background: #cdcdcd; }

/* command window and status */
.cmd { margin-top: 1px; border-left: 12px solid #a4a4a4; background: #c8c8c8; font: 10px/11px "Noto Sans Mono CJK SC", "Noto Sans CJK SC", monospace; color: #222; }
.log { height: 29px; line-height: 13px; border-bottom: 1px solid #aaa; }
.prompt { display: flex; background: #fff; line-height: 12px; height: 13px; }
.prompt input { flex: 1; }
.status { height: 17px; border-top: 1px solid #555; background: linear-gradient(#777, #929292); padding-left: 5px; color: #111; }
.taskbar { display: flex; height: 29px; background: #04171b; }
.start { width: 35px; display: grid; place-items: center; }
.start svg { width: 12px; height: 12px; stroke: none; }
.search { width: 252px; background: #f2f2f2; display: flex; align-items: center; padding: 0 7px; }
.search svg { width: 16px; height: 16px; }
.search input { flex: 1; min-width: 0; padding-left: 6px; font-size: 10px; }
.search input::placeholder { color: #444; opacity: 1; }
.task { width: 29px; margin-left: 4px; margin-right: 2px; border-bottom: 2px solid #79bccb; display: grid; place-items: center; }
.task svg { width: 18px; height: 18px; stroke: none; }
.task.now { width: 35px; margin: 0 0 0 1px; background: #3c4b4f; }
.search + .task { margin-left: 5px; margin-right: 3px; }

/* overlays */
.pointer { position: absolute; left: 368px; top: 100px; width: 364px; height: 228px; z-index: 30; pointer-events: none; }
.wm { position: absolute; right: 100px; bottom: 20px; width: 133px; height: 86px; overflow: hidden; color: #f1f1f1; font-family: "Liberation Sans", sans-serif; }
.paw { position: absolute; left: 75px; top: 0; width: 30px; height: 16px; stroke: #ccc; fill: #fff; }
.wm-a { display: block; padding-top: 18px; font-size: 41px; line-height: 44px; font-weight: 700; text-shadow: 0 0 2px #888; }
.wm-b { display: block; font-size: 22px; line-height: 22px; }
.brand { position: absolute; right: 0; bottom: 0; width: 200px; height: 95px; background: #212f54; color: #cbcccb; display: flex; align-items: center; gap: 8px; padding: 0 10px 0 12px; z-index: 40; white-space: nowrap; }
.brand svg { width: 44px; height: 60px; }
.words { padding-top: 2px; }
.b1 { display: flex; align-items: center; font: 500 28px/34px "Noto Sans CJK SC", sans-serif; }
.b1 span { font: 400 34px/34px Roboto, sans-serif; }
.b2 { font: 300 24px/26px Inter, sans-serif; }
```
